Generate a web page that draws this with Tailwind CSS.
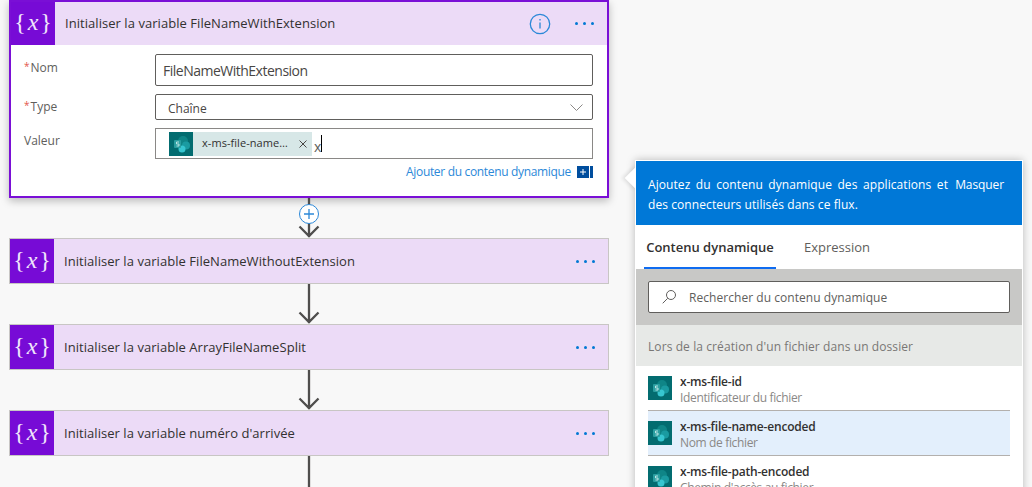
<!DOCTYPE html>
<html lang="fr">
<head>
  <meta charset="UTF-8" />
  <title>Flow</title>
  <script src="https://cdn.jsdelivr.net/npm/@tailwindcss/browser@4"></script>
</head>
<body class="relative h-[487px] w-[1032px] overflow-hidden bg-[#f8f8f8] font-['Open_Sans',sans-serif] text-[#323130]">

  <main class="ml-[9px] w-[600px]">
    <!-- open card -->
    <section class="h-[198px] border-2 border-[#7a0fd6] bg-white shadow-[0_3px_8px_rgba(0,0,0,0.25)]">
      <header class="flex h-[43px] items-center bg-[#ecdbf7]">
        <div class="flex h-[43px] w-[44px] items-center justify-center bg-[#770bd6] pb-[3px] font-['Liberation_Serif',serif] text-[24px] text-white/90">{<i class="mx-[2px]">x</i>}</div>
        <h2 class="ml-[10px] flex-1 text-[13px] tracking-[0.05px]">Initialiser la variable FileNameWithExtension</h2>
        <svg class="mr-[24px]" width="22" height="22" viewBox="0 0 22 22" fill="none" stroke="#2b88d8" stroke-width="1.300"><circle cx="11" cy="11" r="9.700"/><path d="M11 9.500v6M11 6v1.500"/></svg>
        <div class="mr-[13px] flex gap-[5px]"><i class="h-[3px] w-[3px] rounded-full bg-[#0078d4]"></i><i class="h-[3px] w-[3px] rounded-full bg-[#0078d4]"></i><i class="h-[3px] w-[3px] rounded-full bg-[#0078d4]"></i></div>
      </header>
      <div class="relative pt-[9px] pr-[14px] pl-[13px] text-[12px] text-[#605e5c]">
        <div class="flex h-[32px]">
          <label class="flex w-[131px] gap-[1px] pt-[5px]"><span class="text-[10px] text-[#e2574c]">*</span>Nom</label>
          <div class="flex flex-1 items-center rounded-[2px] border border-[#605e5c] pl-[7px] text-[14px] tracking-[-0.5px] text-[#484644]">FileNameWithExtension</div>
        </div>
        <div class="mt-[8px] flex h-[26px]">
          <label class="flex w-[131px] gap-[1px] pt-[4px]"><span class="text-[10px] text-[#e2574c]">*</span>Type</label>
          <div class="flex flex-1 items-center justify-between rounded-[2px] border border-[#605e5c] pr-[9px] pl-[12px] text-[#484644]">
            <span class="pt-[3px]">Chaîne</span>
            <svg class="mt-[2px]" width="13" height="8" viewBox="0 0 13 8" fill="none" stroke="#8a8886"><path d="M.5.500l6 6 6-6"/></svg>
          </div>
        </div>
        <div class="mt-[8px] flex h-[31px]">
          <label class="w-[131px] pt-[4px]">Valeur</label>
          <div class="flex flex-1 items-center border border-[#8a8886] pl-[13px]">
            <span class="flex h-[24px] w-[143px] items-center bg-[#d7e7e7] text-[#323130]">
              <svg class="shrink-0" width="24" height="24" viewBox="0 0 24 24"><rect width="24" height="24" fill="#036c70"/><circle cx="14" cy="9" r="5" fill="#0f8587"/><circle cx="17" cy="13.500" r="4" fill="#1a9ba1"/><circle cx="13" cy="17" r="3.500" fill="#37c6d0"/><rect x="5" y="8" width="7" height="8" rx="1" fill="#2a9ea0"/><path d="M10 10H7.500v2H10v2H7.500" fill="none" stroke="#d9f2f2" stroke-width=".8"/></svg>
              <span class="ml-[9px] w-[92px] whitespace-nowrap text-[11px] tracking-[0.05px]">x-ms-file-name…</span>
              <svg class="ml-[5px]" width="8" height="8" viewBox="0 0 8 8" stroke="#484644"><path d="M.5.500l7 7M7.500.500l-7 7"/></svg>
            </span>
            <span class="mt-[5px] ml-[2px] text-[14px] text-[#605e5c]">x</span>
            <span class="h-[17px] w-px bg-black"></span>
          </div>
        </div>
        <div class="mt-[4px] flex items-center justify-end text-[12px] tracking-[-0.33px] text-[#2b88d8]">
          Ajouter du contenu dynamique
          <span class="ml-[6px] flex h-[12px] w-[16px]">
            <span class="flex h-[12px] w-[12px] items-center justify-center bg-[#004e9e]"><svg width="6" height="6" viewBox="0 0 6 6" stroke="#fff"><path d="M3 0v6M0 3h6"/></svg></span>
            <span class="ml-[1px] h-[12px] w-[3px] bg-[#004e9e]"></span>
          </span>
        </div>
      </div>
    </section>

    <!-- first connector, with the add button -->
    <div class="relative flex h-[40px] justify-center">
      <svg width="22" height="40" viewBox="0 0 22 40" fill="none" stroke="#4f4e4d" stroke-width="2.300"><path d="M11 0v39M1.500 28.500l9.500 9.500 9.500-9.500"/></svg>
      <span class="absolute top-[6px] left-[290px] flex h-[20px] w-[20px] items-center justify-center rounded-full border border-[#2b88d8] bg-white">
        <svg width="10" height="10" viewBox="0 0 10 10" stroke="#2b88d8" stroke-width="1.300"><path d="M5 0v10M0 5h10"/></svg>
      </span>
    </div>

    <section class="flex h-[46px] items-center border border-[#c8c6c4] bg-[#ecdbf7]">
      <div class="flex h-[44px] w-[44px] items-center justify-center bg-[#770bd6] pb-[3px] font-['Liberation_Serif',serif] text-[24px] text-white/90">{<i class="mx-[2px]">x</i>}</div>
      <h2 class="ml-[10px] flex-1 pt-[2px] text-[13px] tracking-[0.05px]">Initialiser la variable FileNameWithoutExtension</h2>
      <div class="mr-[13px] flex gap-[5px]"><i class="h-[3px] w-[3px] rounded-full bg-[#0078d4]"></i><i class="h-[3px] w-[3px] rounded-full bg-[#0078d4]"></i><i class="h-[3px] w-[3px] rounded-full bg-[#0078d4]"></i></div>
    </section>

    <div class="flex h-[40px] justify-center">
      <svg width="22" height="40" viewBox="0 0 22 40" fill="none" stroke="#4f4e4d" stroke-width="2.300"><path d="M11 0v39M1.500 28.500l9.500 9.500 9.500-9.500"/></svg>
    </div>

    <section class="flex h-[46px] items-center border border-[#c8c6c4] bg-[#ecdbf7]">
      <div class="flex h-[44px] w-[44px] items-center justify-center bg-[#770bd6] pb-[3px] font-['Liberation_Serif',serif] text-[24px] text-white/90">{<i class="mx-[2px]">x</i>}</div>
      <h2 class="ml-[10px] flex-1 pt-[2px] text-[13px] tracking-[0.05px]">Initialiser la variable ArrayFileNameSplit</h2>
      <div class="mr-[13px] flex gap-[5px]"><i class="h-[3px] w-[3px] rounded-full bg-[#0078d4]"></i><i class="h-[3px] w-[3px] rounded-full bg-[#0078d4]"></i><i class="h-[3px] w-[3px] rounded-full bg-[#0078d4]"></i></div>
    </section>

    <div class="flex h-[40px] justify-center">
      <svg width="22" height="40" viewBox="0 0 22 40" fill="none" stroke="#4f4e4d" stroke-width="2.300"><path d="M11 0v39M1.500 28.500l9.500 9.500 9.500-9.500"/></svg>
    </div>

    <section class="flex h-[46px] items-center border border-[#c8c6c4] bg-[#ecdbf7]">
      <div class="flex h-[44px] w-[44px] items-center justify-center bg-[#770bd6] pb-[3px] font-['Liberation_Serif',serif] text-[24px] text-white/90">{<i class="mx-[2px]">x</i>}</div>
      <h2 class="ml-[10px] flex-1 pt-[2px] text-[13px] tracking-[0.05px]">Initialiser la variable numéro d'arrivée</h2>
      <div class="mr-[13px] flex gap-[5px]"><i class="h-[3px] w-[3px] rounded-full bg-[#0078d4]"></i><i class="h-[3px] w-[3px] rounded-full bg-[#0078d4]"></i><i class="h-[3px] w-[3px] rounded-full bg-[#0078d4]"></i></div>
    </section>

    <div class="flex h-[31px] justify-center">
      <svg width="22" height="31" viewBox="0 0 22 31" fill="none" stroke="#4f4e4d" stroke-width="2.300"><path d="M11 0v31"/></svg>
    </div>
  </main>

  <!-- dynamic content flyout -->
  <aside class="absolute top-[160px] left-[635px] h-[340px] w-[388px] border border-white bg-white shadow-[0_0_8px_rgba(0,0,0,0.25)]">
    <span class="absolute top-[9px] -left-[8px] h-[16px] w-[16px] rotate-45 bg-white shadow-[-2px_2px_4px_rgba(0,0,0,0.1)]"></span>
    <div class="relative flex h-[64px] bg-[#0078d7] pt-[14px] pr-[18px] pl-[12px] text-[12px] leading-[20px] font-medium tracking-[0.08px] text-white">
      <p class="w-[300px] text-justify">Ajoutez du contenu dynamique des applications et des connecteurs utilisés dans ce flux.</p>
      <span class="ml-auto tracking-[-0.1px]">Masquer</span>
    </div>
    <nav class="relative flex h-[44px] bg-white pl-[8px] text-[13px] tracking-[0px]">
      <span class="flex h-[44px] w-[132px] items-center justify-center border-b-2 border-[#0f6cf0] pt-[3px] font-semibold">Contenu dynamique</span>
      <span class="ml-[28px] flex h-[44px] items-center pt-[2px] text-[#605e5c]">Expression</span>
    </nav>
    <div class="bg-[#c8c8c6] px-[12px] pt-[12px] pb-[12px]">
      <div class="flex h-[32px] w-[362px] items-center rounded-[2px] border border-[#605e5c] bg-white pl-[12px] text-[12px] text-[#605e5c]">
        <svg width="16" height="16" viewBox="0 0 16 16" fill="none" stroke="#605e5c"><circle cx="10" cy="6" r="4.500"/><path d="M6.700 9.300l-5 5"/></svg>
        <span class="ml-[12px] pt-[1px] tracking-[0.05px]">Rechercher du contenu dynamique</span>
      </div>
    </div>
    <div class="flex h-[41px] items-center bg-[#e7e9e7] pt-[2px] pl-[12px] text-[12px] tracking-[0.09px] text-[#797775]">Lors de la création d'un fichier dans un dossier</div>

    <ul class="px-[12px]">
      <li class="flex h-[45px] items-start border-b border-[#b3b0ad] pt-[10px]">
        <svg class="shrink-0" width="24" height="24" viewBox="0 0 24 24"><rect width="24" height="24" fill="#036c70"/><circle cx="14" cy="9" r="5" fill="#0f8587"/><circle cx="17" cy="13.500" r="4" fill="#1a9ba1"/><circle cx="13" cy="17" r="3.500" fill="#37c6d0"/><rect x="5" y="8" width="7" height="8" rx="1" fill="#2a9ea0"/><path d="M10 10H7.500v2H10v2H7.500" fill="none" stroke="#d9f2f2" stroke-width=".8"/></svg>
        <div class="-mt-[2px] ml-[8px] text-[12px] leading-[16px]"><div class="font-semibold tracking-[-0.2px]">x-ms-file-id</div><div class="tracking-[-0.35px] text-[#8a8886]">Identificateur du fichier</div></div>
      </li>
      <li class="flex h-[45px] items-start border-b border-[#b3b0ad] bg-[#e3effc] pt-[10px]">
        <svg class="shrink-0" width="24" height="24" viewBox="0 0 24 24"><rect width="24" height="24" fill="#036c70"/><circle cx="14" cy="9" r="5" fill="#0f8587"/><circle cx="17" cy="13.500" r="4" fill="#1a9ba1"/><circle cx="13" cy="17" r="3.500" fill="#37c6d0"/><rect x="5" y="8" width="7" height="8" rx="1" fill="#2a9ea0"/><path d="M10 10H7.500v2H10v2H7.500" fill="none" stroke="#d9f2f2" stroke-width=".8"/></svg>
        <div class="-mt-[2px] ml-[8px] text-[12px] leading-[16px]"><div class="font-semibold tracking-[-0.2px]">x-ms-file-name-encoded</div><div class="tracking-[-0.35px] text-[#8a8886]">Nom de fichier</div></div>
      </li>
      <li class="flex h-[45px] items-start pt-[10px]">
        <svg class="shrink-0" width="24" height="24" viewBox="0 0 24 24"><rect width="24" height="24" fill="#036c70"/><circle cx="14" cy="9" r="5" fill="#0f8587"/><circle cx="17" cy="13.500" r="4" fill="#1a9ba1"/><circle cx="13" cy="17" r="3.500" fill="#37c6d0"/><rect x="5" y="8" width="7" height="8" rx="1" fill="#2a9ea0"/><path d="M10 10H7.500v2H10v2H7.500" fill="none" stroke="#d9f2f2" stroke-width=".8"/></svg>
        <div class="-mt-[2px] ml-[8px] text-[12px] leading-[16px]"><div class="font-semibold tracking-[-0.2px]">x-ms-file-path-encoded</div><div class="tracking-[-0.35px] text-[#8a8886]">Chemin d'accès au fichier</div></div>
      </li>
    </ul>
  </aside>
</body>
</html>
